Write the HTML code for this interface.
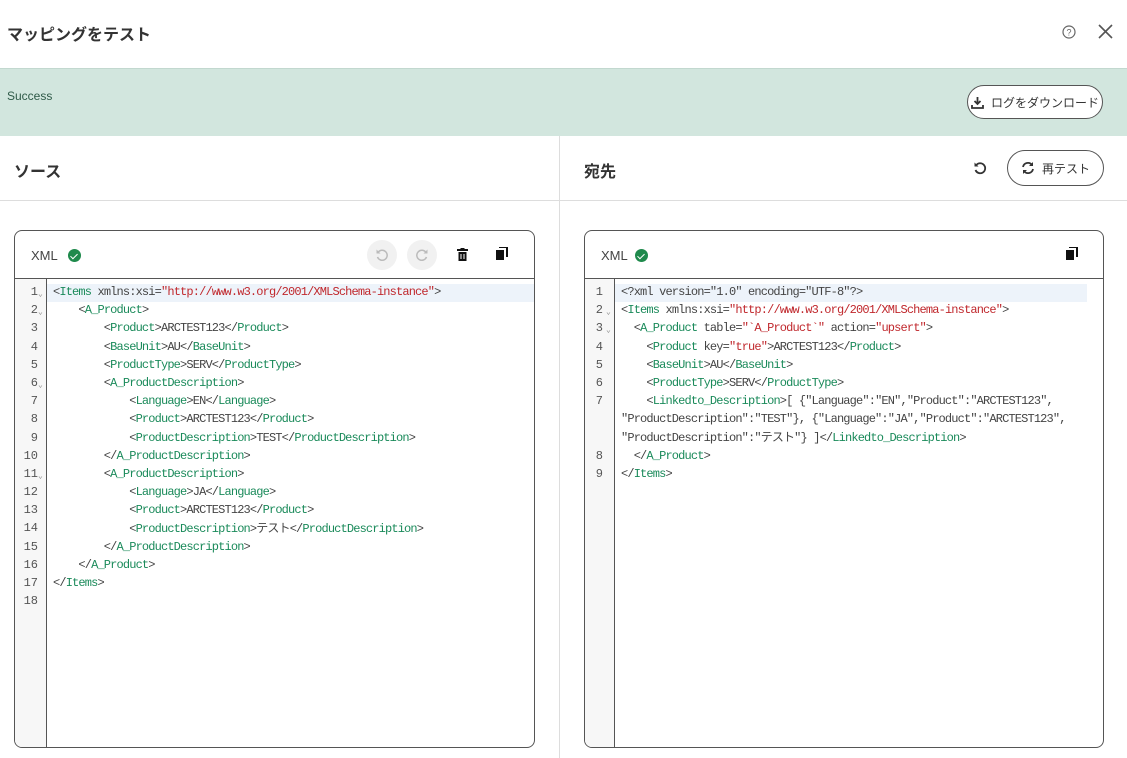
<!DOCTYPE html>
<html><head><meta charset="utf-8"><style>
*{box-sizing:border-box;margin:0;padding:0}
body{width:1127px;height:758px;background:#fff;font-family:"Liberation Sans","Noto Sans CJK JP",sans-serif;color:#333;position:relative;overflow:hidden}
.abs{position:absolute}
.title{left:7px;top:21px;font-size:16px;font-weight:bold;color:#333}
.banner{left:0;top:68px;width:1127px;height:68px;background:#d2e6de;border-top:1px solid #c2d8cf}
.btn{position:absolute;border:1px solid #555;border-radius:18px;background:#fff;font-size:12px;color:#333;display:flex;align-items:center;justify-content:center;gap:7px}
.sec{font-size:16px;font-weight:bold;color:#333}
.card{border:1px solid #555;border-radius:8px;background:#fff;overflow:hidden}
.card .hd{height:48px;border-bottom:1px solid #555;position:relative}
.gut{position:absolute;left:0;top:48px;bottom:0;border-right:1px solid #555;background:#f7f7f7}
.code{position:absolute;top:52px;font-family:"Liberation Mono","Noto Sans CJK JP",monospace;font-size:12px;letter-spacing:-0.85px;line-height:18.2px;white-space:pre;color:#444}
.ln{position:absolute;top:52px;left:0;font-family:"Liberation Mono",monospace;font-size:12px;line-height:18.2px;color:#555}
.ln div{height:18.2px;position:relative}
.ln b{font-weight:normal;position:absolute;right:0;text-align:right}
.ln i{position:absolute;font-style:normal;font-size:8px;color:#888;top:3px}
.t{color:#1a8a5a}.s{color:#c0282d}
.hl{position:absolute;height:18px;background:#edf3fa}
.chk{display:inline-block;width:13px;height:13px;border-radius:50%;background:#1f8a4c;vertical-align:middle;position:relative}
.chk:after{content:"";position:absolute;left:4px;top:2.5px;width:3px;height:6px;border:solid #fff;border-width:0 1.6px 1.6px 0;transform:rotate(45deg)}
</style></head><body>
<div class="abs title">マッピングをテスト</div>
<svg class="abs" style="left:1062px;top:25px" width="14" height="14" viewBox="0 0 14 14"><circle cx="7" cy="7" r="6" fill="none" stroke="#666" stroke-width="1.2"/><text x="7" y="10.5" font-size="9" text-anchor="middle" fill="#666" font-family="Liberation Sans">?</text></svg>
<svg class="abs" style="left:1098px;top:24px" width="15" height="15" viewBox="0 0 15 15"><path d="M1 1L14 14M14 1L1 14" stroke="#555" stroke-width="1.6"/></svg>
<div class="abs banner"></div>
<div class="abs" style="left:7px;top:89px;font-size:12px;color:#2f5a48">Success</div>
<div class="btn" style="left:967px;top:85px;width:136px;height:34px"><svg width="13" height="13" viewBox="0 0 13 13"><path d="M6.5 1v7M3.5 5l3 3 3-3" stroke="#333" stroke-width="1.8" fill="none"/><path d="M1 9v3h11V9" stroke="#333" stroke-width="1.8" fill="none"/></svg>ログをダウンロード</div>
<div class="abs sec" style="left:14px;top:158px">ソース</div>
<div class="abs sec" style="left:584px;top:158px">宛先</div>
<div class="abs" style="left:559px;top:136px;width:1px;height:622px;background:#ddd"></div>
<div class="abs" style="left:0;top:200px;width:1127px;height:1px;background:#ddd"></div>
<svg class="abs" style="left:973px;top:161px" width="14" height="14" viewBox="0 0 14 14"><path d="M3 4.5A5 5 0 1 1 2.5 9" stroke="#333" stroke-width="1.8" fill="none"/><path d="M1.5 1.5v4h4" fill="#333"/></svg>
<div class="btn" style="left:1007px;top:150px;width:97px;height:36px"><svg width="14" height="14" viewBox="0 0 14 14"><path d="M2 6a5 5 0 0 1 9-2M12 8a5 5 0 0 1-9 2" stroke="#333" stroke-width="1.8" fill="none"/><path d="M12 1v4H8zM2 13V9h4z" fill="#333"/></svg>再テスト</div>

<div class="abs card" style="left:14px;top:230px;width:521px;height:518px">
 <div class="hd"><span style="position:absolute;left:16px;top:17px;font-size:13px;color:#444">XML</span><span class="chk" style="position:absolute;left:53px;top:18px"></span>
 <div style="position:absolute;left:352px;top:9px;width:30px;height:30px;border-radius:50%;background:#f1f1f1"></div>
 <div style="position:absolute;left:392px;top:9px;width:30px;height:30px;border-radius:50%;background:#f1f1f1"></div>
 <svg style="position:absolute;left:360px;top:17px" width="14" height="14" viewBox="0 0 14 14"><path d="M3 4.5A5 5 0 1 1 2.5 9" stroke="#bbb" stroke-width="1.5" fill="none"/><path d="M1.5 1.5v4h4" fill="#bbb"/></svg>
 <svg style="position:absolute;left:400px;top:17px" width="14" height="14" viewBox="0 0 14 14"><path d="M11 4.5A5 5 0 1 0 11.5 9" stroke="#bbb" stroke-width="1.5" fill="none"/><path d="M12.5 1.5v4h-4" fill="#bbb"/></svg>
 <svg style="position:absolute;left:442px;top:17px" width="11" height="13" viewBox="0 0 11 13"><rect x="0" y="1" width="11" height="2" fill="#111"/><rect x="3.5" y="0" width="4" height="2" fill="#111"/><path d="M1.5 4h8v9h-8z" fill="#111"/><path d="M4 6v5M7 6v5" stroke="#fff"/></svg>
 <svg style="position:absolute;left:481px;top:16px" width="12" height="14" viewBox="0 0 12 14"><rect x="0" y="3" width="8" height="10" fill="#111"/><path d="M3 0h8v10" stroke="#111" stroke-width="2" fill="none"/></svg>
 </div>
 <div class="gut" style="width:32px"></div>
 <div class="hl" style="left:32px;top:53px;width:488px"></div>
 <div class="ln" style="width:23px">
 <div><b>1</b><i style="left:23px">⌄</i></div><div><b>2</b><i style="left:23px">⌄</i></div><div><b>3</b></div><div><b>4</b></div><div><b>5</b></div><div><b>6</b><i style="left:23px">⌄</i></div><div><b>7</b></div><div><b>8</b></div><div><b>9</b></div><div><b>10</b></div><div><b>11</b><i style="left:23px">⌄</i></div><div><b>12</b></div><div><b>13</b></div><div><b>14</b></div><div><b>15</b></div><div><b>16</b></div><div><b>17</b></div><div><b>18</b></div>
 </div>
 <div class="code" style="left:38px">&lt;<span class="t">Items</span> xmlns:xsi=<span class="s">"http://www.w3.org/2001/XMLSchema-instance"</span>&gt;
    &lt;<span class="t">A_Product</span>&gt;
        &lt;<span class="t">Product</span>&gt;ARCTEST123&lt;/<span class="t">Product</span>&gt;
        &lt;<span class="t">BaseUnit</span>&gt;AU&lt;/<span class="t">BaseUnit</span>&gt;
        &lt;<span class="t">ProductType</span>&gt;SERV&lt;/<span class="t">ProductType</span>&gt;
        &lt;<span class="t">A_ProductDescription</span>&gt;
            &lt;<span class="t">Language</span>&gt;EN&lt;/<span class="t">Language</span>&gt;
            &lt;<span class="t">Product</span>&gt;ARCTEST123&lt;/<span class="t">Product</span>&gt;
            &lt;<span class="t">ProductDescription</span>&gt;TEST&lt;/<span class="t">ProductDescription</span>&gt;
        &lt;/<span class="t">A_ProductDescription</span>&gt;
        &lt;<span class="t">A_ProductDescription</span>&gt;
            &lt;<span class="t">Language</span>&gt;JA&lt;/<span class="t">Language</span>&gt;
            &lt;<span class="t">Product</span>&gt;ARCTEST123&lt;/<span class="t">Product</span>&gt;
            &lt;<span class="t">ProductDescription</span>&gt;テスト&lt;/<span class="t">ProductDescription</span>&gt;
        &lt;/<span class="t">A_ProductDescription</span>&gt;
    &lt;/<span class="t">A_Product</span>&gt;
&lt;/<span class="t">Items</span>&gt;
</div>
</div>

<div class="abs card" style="left:584px;top:230px;width:520px;height:518px">
 <div class="hd"><span style="position:absolute;left:16px;top:17px;font-size:13px;color:#444">XML</span><span class="chk" style="position:absolute;left:50px;top:18px"></span>
 <svg style="position:absolute;left:481px;top:16px" width="12" height="14" viewBox="0 0 12 14"><rect x="0" y="3" width="8" height="10" fill="#111"/><path d="M3 0h8v10" stroke="#111" stroke-width="2" fill="none"/></svg>
 </div>
 <div class="gut" style="width:30px"></div>
 <div class="hl" style="left:30px;top:53px;width:472px"></div>
 <div class="ln" style="width:18px">
 <div><b>1</b></div><div><b>2</b><i style="left:21px">⌄</i></div><div><b>3</b><i style="left:21px">⌄</i></div><div><b>4</b></div><div><b>5</b></div><div><b>6</b></div><div><b>7</b></div><div></div><div></div><div><b>8</b></div><div><b>9</b></div>
 </div>
 <div class="code" style="left:36px">&lt;?xml version="1.0" encoding="UTF-8"?&gt;
&lt;<span class="t">Items</span> xmlns:xsi=<span class="s">"http://www.w3.org/2001/XMLSchema-instance"</span>&gt;
  &lt;<span class="t">A_Product</span> table=<span class="s">"`A_Product`"</span> action=<span class="s">"upsert"</span>&gt;
    &lt;<span class="t">Product</span> key=<span class="s">"true"</span>&gt;ARCTEST123&lt;/<span class="t">Product</span>&gt;
    &lt;<span class="t">BaseUnit</span>&gt;AU&lt;/<span class="t">BaseUnit</span>&gt;
    &lt;<span class="t">ProductType</span>&gt;SERV&lt;/<span class="t">ProductType</span>&gt;
    &lt;<span class="t">Linkedto_Description</span>&gt;[ {"Language":"EN","Product":"ARCTEST123",
"ProductDescription":"TEST"}, {"Language":"JA","Product":"ARCTEST123",
"ProductDescription":"テスト"} ]&lt;/<span class="t">Linkedto_Description</span>&gt;
  &lt;/<span class="t">A_Product</span>&gt;
&lt;/<span class="t">Items</span>&gt;</div>
</div>
</body></html>
